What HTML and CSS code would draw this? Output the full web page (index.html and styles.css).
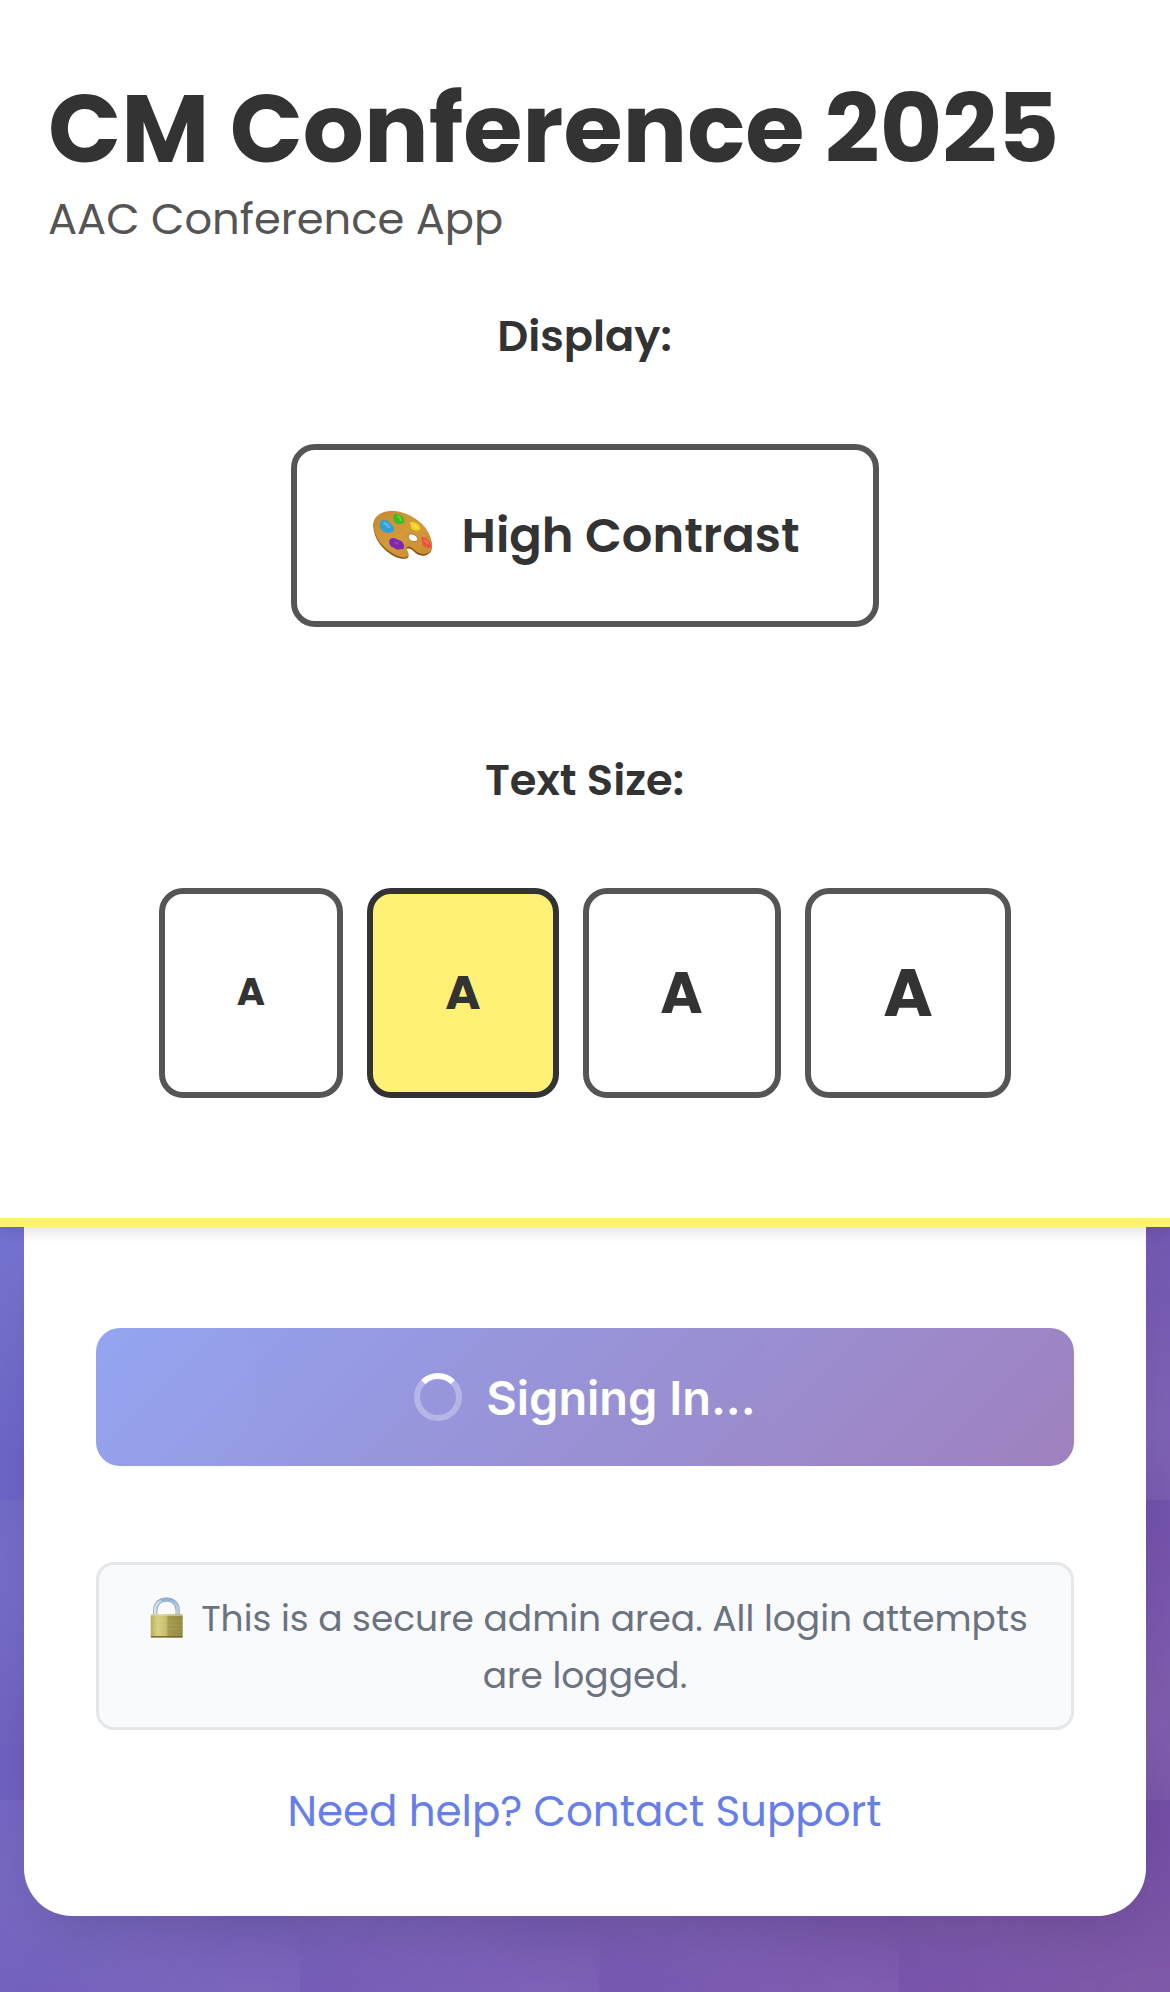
FILE: index.html
```html
<!DOCTYPE html>
<html lang="en">
<head>
<meta charset="utf-8">
<title>CM Conference 2025</title>
<link rel="stylesheet" href="styles.css">
</head>
<body>
<header class="header">
  <div class="brand">
    <h1 class="title">CM Conference 2025</h1>
    <p class="subtitle">AAC Conference App</p>
  </div>
  <section class="group">
    <h2 class="label">Display:</h2>
    <button class="option contrast">
      <svg class="palette" viewBox="0 0 60 50" aria-hidden="true">
        <defs>
          <linearGradient id="wood" x1="0" y1="0" x2="1" y2="1">
            <stop offset="0" stop-color="#c68a2c"/><stop offset=".5" stop-color="#d39a3c"/><stop offset="1" stop-color="#c98b2e"/>
          </linearGradient>
        </defs>
        <path d="M17 1C29-1 45 7 53 18C59 26 61 36 58 41C55 45.500 48 46 43 42C40 39 38 37 35 37.500C32 39 36.500 43 36 45.500C35.500 48.500 29 48.500 23 46C11 40 1 28 .8 15C.6 7 7 2 17 1Z" fill="#8a5518"/>
        <path fill-rule="evenodd" d="M17 0C29-1 45 6 53 17C59 25 61 35 58 40C55 44 48 44 43 40C40 37 38 35 35 35.500C32 37 37 41 36 44C35 47.500 29 47 23 44C11 38 1.400 27 1 14C1 6 7 1 17 0ZM36 24C35 27 37 30 41 30.500C44 31 46 29 45 27C43 23 38 22 36 24Z" fill="url(#wood)"/>
        <path d="M36 24C35 27 37 30 41 30.500C44 31 46 29 45 27C43 23 38 22 36 24Z" fill="#fff" stroke="#8d5a17" stroke-width=".6"/>
        <path d="M21 4C23 2 28 3 31 7C33 10 32 13 28 13C24 14 20 11 21 4Z" fill="#3cbb24"/>
        <path d="M25 5Q29 7 28 10" fill="none" stroke="#63d23f" stroke-width="2"/>
        <path d="M9 9C12 8 16 9 17 12C21 14 23 19 20 21C15 23 9 21 7 16C8 13 7 11 9 9Z" fill="#2f9fd8"/>
        <path d="M11 12Q15 13 17 17" fill="none" stroke="#55bbe8" stroke-width="2.500"/>
        <path d="M37 12C42 9 48 14 48 18C46 20 44 20 41 19C38 18 39 15 37 12Z" fill="#f4cf2a"/>
        <path d="M41 14L45 17" fill="none" stroke="#ffe24a" stroke-width="2"/>
        <path d="M17 29C19 26 23 27 26 29C29 29 33 33 31 38C27 38 25 40 22 37C18 36 16 33 17 29Z" fill="#7d28b0"/>
        <path d="M22 31L26 33" fill="none" stroke="#9040c0" stroke-width="2"/>
        <path d="M49 26C53 25 60 32 59 36C56 38 52 36 50 34C51 31 48 29 49 26Z" fill="#f0513c"/>
        <path d="M52 29L56 33" fill="none" stroke="#fa7560" stroke-width="2"/>
      </svg>
      <span>High Contrast</span>
    </button>
  </section>
  <section class="group">
    <h2 class="label">Text Size:</h2>
    <div class="sizes">
      <button class="option size size-small">A</button>
      <button class="option size size-medium active">A</button>
      <button class="option size size-large">A</button>
      <button class="option size size-xlarge">A</button>
    </div>
  </section>
</header>
<main class="card">
  <button class="signin"><span class="spinner"></span><span>Signing In...</span></button>
  <p class="notice"><svg class="lock" viewBox="0 0 34 41" aria-hidden="true">
      <defs>
        <linearGradient id="brass" x1="0" x2="1" y1="0" y2="0">
          <stop offset="0" stop-color="#b8ad58"/><stop offset=".22" stop-color="#d8d083"/><stop offset=".48" stop-color="#c8bd67"/><stop offset=".55" stop-color="#a69b4c"/><stop offset="1" stop-color="#938a45"/>
        </linearGradient>
        <linearGradient id="steel" x1="0" x2="0" y1="0" y2="1">
          <stop offset="0" stop-color="#8fb2d8"/><stop offset=".35" stop-color="#aacbea"/><stop offset="1" stop-color="#c3ccd1"/>
        </linearGradient>
      </defs>
      <path d="M5.300 19V13C5.300 -1 27.700 -1 27.700 13V19" fill="none" stroke="#8a969c" stroke-width="4.200"/>
      <path d="M5.300 19V13C5.300 -1 27.700 -1 27.700 13V19" fill="none" stroke="url(#steel)" stroke-width="3.400"/>
      <path d="M4.800 18V13Q5.400 6.500 11 3.800" fill="none" stroke="#e7f2fa" stroke-width="1.200"/>
      <rect x=".7" y="17.500" width="32" height="23" rx="1" fill="url(#brass)"/>
      <path d="M1 18.200H32.500" stroke="#ddd693" stroke-width="1"/>
      <path d="M1 39.800H32.500" stroke="#77652b" stroke-width="1.400"/>
      <path d="M1 24H32M1 28H32M1 32H32" stroke="#fff" stroke-opacity=".1" stroke-width="1"/>
    </svg>This is a secure admin area. All login attempts are logged.</p>
  <a class="help">Need help? Contact Support</a>
</main>
</body>
</html>
```
FILE: styles.css
```css
* { box-sizing: border-box; margin: 0; padding: 0; }

body {
  min-height: 1992px;
  font-family: Poppins, Inter, sans-serif;
  color: #333;
  background:
    radial-gradient(circle at 20% 25%, rgba(255, 255, 255, .08), transparent 55%) 0 0 / 299.7px 300px,
    radial-gradient(circle at 85% 75%, rgba(255, 255, 255, .09), transparent 60%) 0 0 / 299.7px 300px,
    linear-gradient(135deg, #667eea 0%, #764ba2 100%);
}

button { font-family: inherit; color: inherit; }

.header {
  position: relative;
  z-index: 1;
  height: 1227px;
  padding-top: 71px;
  background: #fff;
  border-bottom: 9px solid #fff176;
  box-shadow: 0 6px 12px rgba(0, 0, 0, .1);
}

.brand { height: 233px; padding-left: 48px; }
.title { font-size: 96px; line-height: 115px; font-weight: 700; }
.subtitle { margin-top: 1px; font-size: 43.2px; line-height: 65px; color: #555; }

.group {
  height: 444px;
  display: flex;
  flex-direction: column;
  align-items: center;
  gap: 75px;
}
.label { font-size: 43.2px; line-height: 65px; font-weight: 600; padding-right: 1px; }

.option {
  display: flex;
  align-items: center;
  justify-content: center;
  background: #fff;
  border: 6px solid #555;
  border-radius: 24px;
}
.contrast { width: 588px; height: 183px; gap: 28px; padding-left: 2px; font-size: 48px; font-weight: 600; }
.palette { width: 61px; height: 50px; }

.sizes { display: flex; gap: 24px; }
.size { height: 210px; font-weight: 700; }
.size-small { width: 184px; padding-bottom: 3px; font-size: 38.4px; }
.size-medium { width: 192px; font-size: 48px; }
.size-large { width: 198px; padding-right: 1px; font-size: 57.6px; }
.size-xlarge { width: 206px; font-size: 67.2px; }
.active { background: #fff176; border-color: #333; }

.card {
  width: 1122px;
  height: 689px;
  margin: 0 auto;
  padding: 101px 72px 0;
  display: flex;
  flex-direction: column;
  align-items: center;
  background: #fff;
  border-radius: 0 0 48px 48px;
  box-shadow: 0 24px 60px -16px rgba(0, 0, 0, .17);
}

.signin {
  width: 100%;
  height: 138px;
  display: flex;
  align-items: center;
  justify-content: center;
  gap: 24px;
  border: 0;
  border-radius: 24px;
  background: linear-gradient(135deg, #667eea 0%, #764ba2 100%);
  opacity: .7;
  color: #fff;
  font: 600 47px Inter, sans-serif;
  letter-spacing: -.05px;
}
.spinner {
  width: 48px;
  height: 48px;
  border: 6px solid rgba(255, 255, 255, .3);
  border-top-color: #fff;
  border-radius: 50%;
}

.notice {
  width: 100%;
  height: 168px;
  margin-top: 96px;
  padding: 25px 36px 0;
  text-align: center;
  font-size: 36px;
  line-height: 57px;
  color: #6b7280;
  background: #f9fafb;
  border: 3px solid #e5e7eb;
  border-radius: 18px;
}
.lock { width: 34px; height: 41px; margin: 0 17px 0 8px; vertical-align: -7px; }

.help { margin-top: 48px; padding-right: 1px; font-size: 42px; line-height: 67px; color: #667eea; }
```
